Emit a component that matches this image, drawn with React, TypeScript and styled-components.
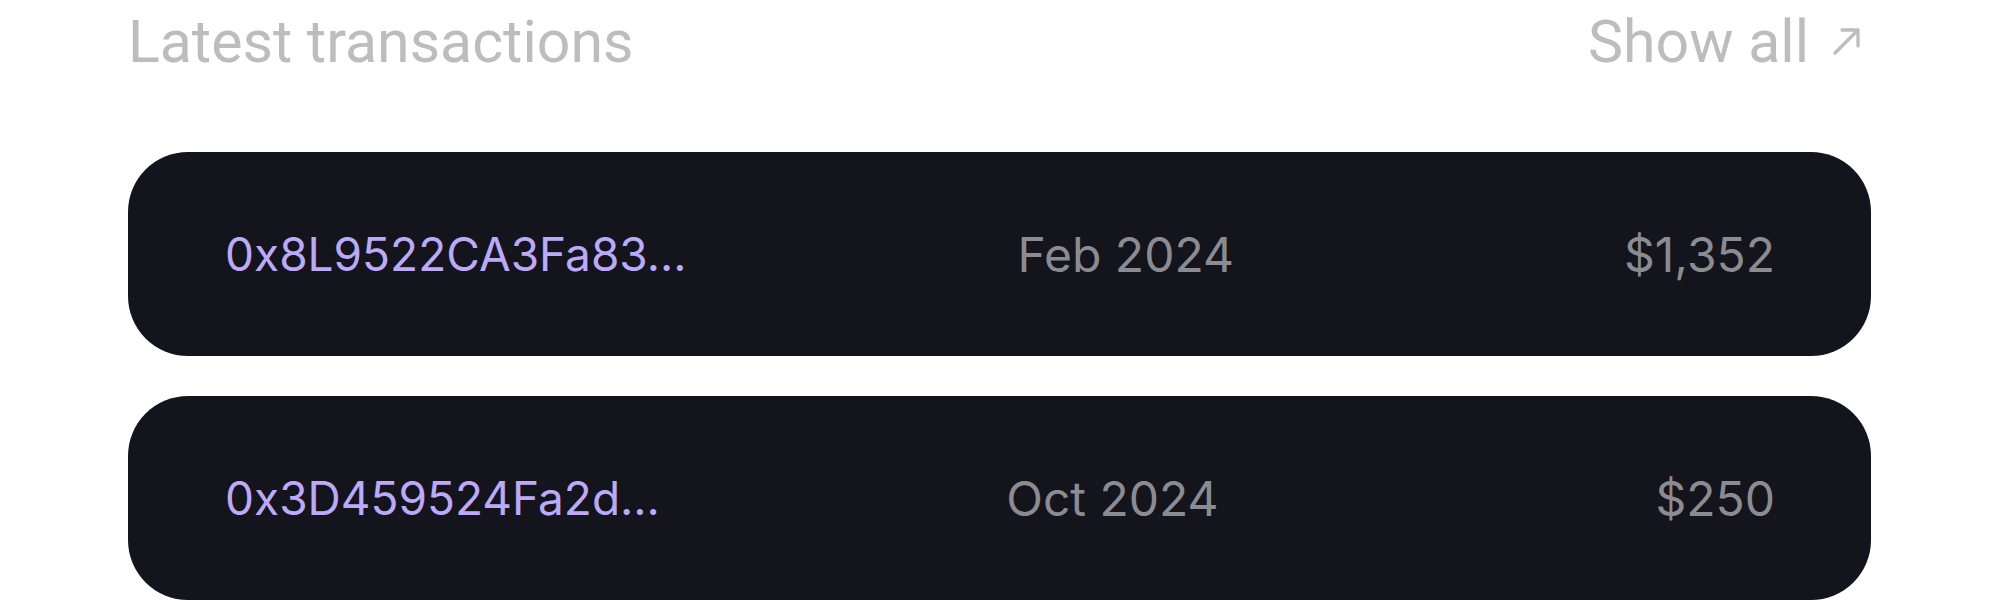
import React from "react";
import styled, { createGlobalStyle } from "styled-components";

const GlobalStyle = createGlobalStyle`
  html, body {
    margin: 0;
    padding: 0;
    background: #ffffff;
  }
  body {
    font-family: "Inter", "Roboto", sans-serif;
  }
`;

const Page = styled.div`
  width: 2000px;
  box-sizing: border-box;
  padding: 0 129px 0 128px;
  display: flex;
  flex-direction: column;
`;

const Header = styled.div`
  display: flex;
  align-items: center;
  justify-content: space-between;
  height: 68px;
  padding-top: 8px;
  margin-bottom: 76px;
`;

const Title = styled.h2`
  margin: 0;
  font-family: "Roboto", sans-serif;
  font-weight: 400;
  font-size: 59px;
  line-height: 68px;
  color: #bdbdbd;
`;

const ShowAll = styled.a`
  display: flex;
  align-items: center;
  gap: 23px;
  margin-right: 10px;
  font-family: "Roboto", sans-serif;
  font-size: 59px;
  line-height: 68px;
  color: #bdbdbd;
  text-decoration: none;
  cursor: pointer;
`;

const ArrowIcon = styled.svg`
  width: 29px;
  height: 29px;
  flex: none;
  margin-top: -2px;
`;

const List = styled.div`
  display: flex;
  flex-direction: column;
  gap: 40px;
`;

const Card = styled.div`
  height: 204px;
  box-sizing: border-box;
  border-radius: 60px;
  background: #14141c;
  padding: 0 96px 0 97px;
  display: grid;
  grid-template-columns: auto 1fr 210px;
  align-items: center;
`;

const Hash = styled.span`
  font-family: "Inter", sans-serif;
  font-size: 46px;
  color: #bcaaf9;
  white-space: nowrap;
`;

const DateText = styled.span`
  font-family: "Inter", sans-serif;
  font-size: 48px;
  color: #8b8b92;
  text-align: center;
`;

const Amount = styled.span`
  font-family: "Inter", sans-serif;
  font-size: 48px;
  color: #8b8b92;
  text-align: right;
`;

const rows = [
  { hash: "0x8L9522CA3Fa83...", date: "Feb 2024", amount: "$1,352" },
  { hash: "0x3D459524Fa2d...", date: "Oct 2024", amount: "$250" },
];

export default function App() {
  return (
    <>
      <GlobalStyle />
      <Page>
        <Header>
          <Title>Latest transactions</Title>
          <ShowAll>
            Show all
            <ArrowIcon viewBox="0 0 29 29" fill="none">
              <path
                d="M3 26 L26 3 M10 3 H26 V19"
                stroke="#bdbdbd"
                strokeWidth="3.3"
                strokeLinecap="round"
                strokeLinejoin="round"
              />
            </ArrowIcon>
          </ShowAll>
        </Header>
        <List>
          {rows.map((r) => (
            <Card key={r.hash}>
              <Hash>{r.hash}</Hash>
              <DateText>{r.date}</DateText>
              <Amount>{r.amount}</Amount>
            </Card>
          ))}
        </List>
      </Page>
    </>
  );
}
